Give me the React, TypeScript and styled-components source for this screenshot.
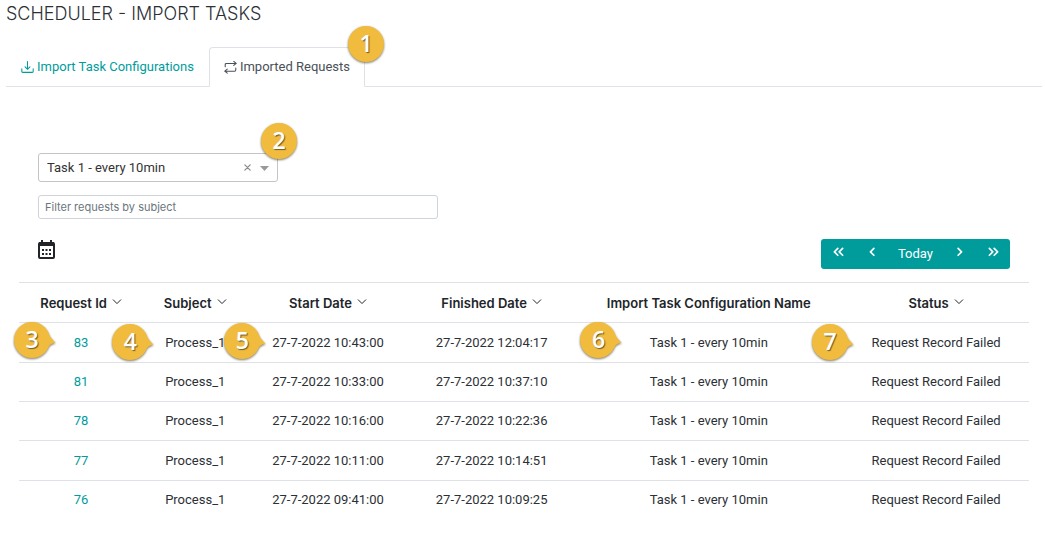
import React from 'react';
import styled, { createGlobalStyle } from 'styled-components';

const Global = createGlobalStyle`
  *, *::before, *::after { box-sizing: border-box; }
  body {
    margin: 0;
    background: #fff;
    color: #2b3035;
    font-family: Roboto, sans-serif;
    font-size: 13px;
    line-height: 20px;
  }
  button, input, select { font: inherit; color: inherit; }
`;

const Page = styled.main`padding: 4px 3px 16px 6px;`;

const Title = styled.h1`
  margin: 0 0 23px;
  font-family: Inter, sans-serif;
  font-size: 18px;
  font-weight: 300;
  line-height: 20px;
  text-transform: uppercase;
`;

const Tabs = styled.nav`
  display: flex;
  border-bottom: 1px solid #dee2e6;
`;

const Tab = styled.a<{ $active?: boolean }>`
  position: relative;
  display: flex;
  align-items: center;
  gap: 3px;
  height: 40px;
  margin-bottom: -1px;
  padding: 0 14px;
  border: 1px solid;
  border-color: ${p => (p.$active ? '#dee2e6 #dee2e6 #fff' : 'transparent')};
  border-radius: 4px 4px 0 0;
  color: ${p => (p.$active ? '#495057' : '#009c9c')};
  text-decoration: none;
  white-space: nowrap;
`;

const Panel = styled.section`padding: 66px 13px 0;`;

const Filters = styled.div`
  display: flex;
  flex-direction: column;
  gap: 13px;
  padding: 0 19px;
`;

const Picker = styled.div`
  position: relative;
  display: flex;
  align-items: center;
  width: 240px;
  height: 29px;
  border: 1px solid #c4c4c4;
  border-radius: 3px;
`;

const Select = styled.select`
  width: 100%;
  height: 100%;
  padding: 0 40px 0 8px;
  border: 0;
  background: transparent;
  appearance: none;
  color: #333;
`;

const Clear = styled.button`
  position: absolute;
  right: 24px;
  top: 6px;
  display: flex;
  padding: 4px 2px;
  border: 0;
  background: none;
  color: #8c8c8c;
`;

const Arrow = styled.svg`
  position: absolute;
  right: 8px;
  top: 12px;
  pointer-events: none;
`;

const Search = styled.input`
  width: 400px;
  max-width: 100%;
  height: 24px;
  padding: 0 6px;
  border: 1px solid #ced4da;
  border-radius: 3px;
  font-family: Inter, sans-serif;
  font-size: 11px;
  &::placeholder { color: #6c757d; opacity: 1; }
`;

const Toolbar = styled.div`
  display: flex;
  align-items: flex-start;
  justify-content: space-between;
  padding: 20px 19px 13px;
`;

const IconButton = styled.button`
  display: flex;
  padding: 1px 0;
  border: 0;
  background: none;
`;

const Pager = styled.div`
  display: flex;
  height: 30px;
  border-radius: 3px;
  background: #009c9c;
  color: #fff;
`;

const PagerButton = styled.button<{ $wide?: boolean }>`
  display: flex;
  align-items: center;
  justify-content: center;
  width: ${p => (p.$wide ? 53 : 34)}px;
  padding: 0;
  border: 0;
  background: none;
  svg { margin-bottom: 3px; }
`;

const Table = styled.table`
  width: 100%;
  table-layout: fixed;
  border-collapse: collapse;
  text-align: center;
`;

const Row = styled.tr`
  height: 39px;
  border-top: 1px solid #dee2e6;
  &:nth-child(3n + 1) { height: 40px; }
`;

const Th = styled.th`
  padding: 0;
  color: #212529;
  font-family: Inter, sans-serif;
  font-weight: 600;
  white-space: nowrap;
`;

const Sort = styled.button`
  display: inline-flex;
  align-items: center;
  gap: 5px;
  padding: 0;
  border: 0;
  background: none;
  font-weight: 600;
  svg { margin-bottom: 2px; }
`;

const Td = styled.td`
  position: relative;
  padding: 0;
  white-space: nowrap;
`;

const IdLink = styled.a`
  color: #009c9c;
  text-decoration: none;
`;

const Marker = styled.span<{ $left?: number; $right?: number; $top: number }>`
  position: absolute;
  z-index: 1;
  top: ${p => p.$top}px;
  ${p => (p.$left !== undefined ? `left: ${p.$left}px;` : `right: ${p.$right}px;`)}
  width: 42px;
  height: 38px;
`;

const MarkerShape = styled.svg`
  display: block;
  filter: drop-shadow(0 1px 1px rgba(70, 60, 30, 0.7));
`;

const MarkerText = styled.span`
  position: absolute;
  left: 0;
  top: 0;
  width: 36px;
  color: #fff;
  font-family: "Open Sans", sans-serif;
  font-size: 23px;
  font-weight: 600;
  line-height: 35px;
  text-align: center;
  text-shadow: 1px 1px 1px #6b5a2a;
`;

interface CalloutProps { n: number; top: number; left?: number; right?: number; pointed?: boolean }

const Callout = ({ n, top, left, right, pointed }: CalloutProps) => (
  <Marker $top={top} $left={left} $right={right}>
    <MarkerShape width="42" height="38" viewBox="0 0 42 38" aria-hidden="true">
      <circle cx="18" cy="18" r="18" fill="#f1bc3e" />
      {pointed && <path d="M33 8.500C35 13.500 38 17.500 41.500 20.500C37.500 21.500 33.500 24 31.500 29Z" fill="#f1bc3e" />}
    </MarkerShape>
    <MarkerText>{n}</MarkerText>
  </Marker>
);

const Icon = ({ size, d, width = 1 }: { size: number; d: string; width?: number }) => (
  <svg width={size} height={size} viewBox="0 0 16 16" fill="none" stroke="currentColor"
    strokeWidth={width} strokeLinecap="round" strokeLinejoin="round" aria-hidden="true">
    <path d={d} />
  </svg>
);

const Chevron = () => <Icon size={10} width={1.6} d="M2 4.500L8 10.500L14 4.500" />;

const columns = [
  { name: 'Request Id', width: '12.3%', sortable: true },
  { name: 'Subject', width: '10.3%', sortable: true },
  { name: 'Start Date', width: '16%', sortable: true },
  { name: 'Finished Date', width: '16.4%', sortable: true },
  { name: 'Import Task Configuration Name', width: '26.6%', sortable: false },
  { name: 'Status', width: '18.4%', sortable: true },
];

const requests = [
  { id: 83, start: '27-7-2022 10:43:00', end: '27-7-2022 12:04:17' },
  { id: 81, start: '27-7-2022 10:33:00', end: '27-7-2022 10:37:10' },
  { id: 78, start: '27-7-2022 10:16:00', end: '27-7-2022 10:22:36' },
  { id: 77, start: '27-7-2022 10:11:00', end: '27-7-2022 10:14:51' },
  { id: 76, start: '27-7-2022 09:41:00', end: '27-7-2022 10:09:25' },
];

export default function App() {
  return (
    <>
      <Global />
      <Page>
        <Title>Scheduler - Import Tasks</Title>
        <Tabs>
          <Tab href="#configurations">
            <Icon size={13} width={1.3} d="M1 9.500V13Q1 14 2 14H14Q15 14 15 13V9.500M8 0.700V10M5 7.200L8 10.200L11 7.200" />
            Import Task Configurations
          </Tab>
          <Tab href="#requests" $active aria-current="page">
            <Icon size={13} width={1.3} d="M1.500 7V4.500Q1.500 3 3 3H15M12 0.500L15 3L12 5.500M14.500 8.500V11Q14.500 12.500 13 12.500H1M4 10L1 12.500L4 15" />
            Imported Requests
            <Callout n={1} top={-22} right={-26} />
          </Tab>
        </Tabs>
        <Panel>
          <Filters>
            <Picker>
              <Select aria-label="Task" defaultValue="task1">
                <option value="task1">Task 1 - every 10min</option>
              </Select>
              <Clear type="button" aria-label="Clear task">
                <Icon size={7} width={3} d="M2 2L14 14M14 2L2 14" />
              </Clear>
              <Arrow width="9" height="5" viewBox="0 0 9 5" aria-hidden="true">
                <path d="M0 0H9L4.500 5Z" fill="#999" />
              </Arrow>
              <Callout n={2} top={-31} right={-26} />
            </Picker>
            <Search type="text" aria-label="Filter requests by subject" placeholder="Filter requests by subject" />
          </Filters>
          <Toolbar>
            <IconButton type="button" aria-label="Choose date">
              <svg width="17" height="19" viewBox="0 0 17 19" fill="none" aria-hidden="true">
                <rect x="1" y="3" width="15" height="15" rx="1" stroke="#212529" strokeWidth="2" />
                <path d="M1 2H16V6H1ZM3 0H5V3H3ZM12 0H14V3H12Z" fill="#212529" />
                <path d="M4 9H6V11H4ZM7.500 9H9.500V11H7.500ZM11 9H13V11H11ZM4 13H6V15H4ZM7.500 13H9.500V15H7.500ZM11 13H13V15H11Z" fill="#212529" />
              </svg>
            </IconButton>
            <Pager>
              <PagerButton type="button" aria-label="First"><Icon size={11} width={2.4} d="M7 2L2 7L7 12M14 2L9 7L14 12" /></PagerButton>
              <PagerButton type="button" aria-label="Previous"><Icon size={11} width={2.4} d="M10 2L5 7L10 12" /></PagerButton>
              <PagerButton type="button" $wide>Today</PagerButton>
              <PagerButton type="button" aria-label="Next"><Icon size={11} width={2.4} d="M6 2L11 7L6 12" /></PagerButton>
              <PagerButton type="button" aria-label="Last"><Icon size={11} width={2.4} d="M2 2L7 7L2 12M9 2L14 7L9 12" /></PagerButton>
            </Pager>
          </Toolbar>
          <Table>
            <colgroup>
              {columns.map(c => <col key={c.name} style={{ width: c.width }} />)}
            </colgroup>
            <thead>
              <Row>
                {columns.map(c => (
                  <Th key={c.name} scope="col">
                    {c.sortable ? <Sort type="button">{c.name}<Chevron /></Sort> : c.name}
                  </Th>
                ))}
              </Row>
            </thead>
            <tbody>
              {requests.map((r, i) => (
                <Row key={r.id}>
                  <Td><IdLink href={`#${r.id}`}>{r.id}</IdLink>{i === 0 && <Callout n={3} top={-1} left={-5} pointed />}</Td>
                  <Td>Process_1{i === 0 && <Callout n={4} top={1} left={-31} pointed />}</Td>
                  <Td>{r.start}{i === 0 && <Callout n={5} top={0} left={-23} pointed />}</Td>
                  <Td>{r.end}</Td>
                  <Td>Task 1 - every 10min{i === 0 && <Callout n={6} top={-1} left={6} pointed />}</Td>
                  <Td>Request Record Failed{i === 0 && <Callout n={7} top={1} left={-31} pointed />}</Td>
                </Row>
              ))}
            </tbody>
          </Table>
        </Panel>
      </Page>
    </>
  );
}
